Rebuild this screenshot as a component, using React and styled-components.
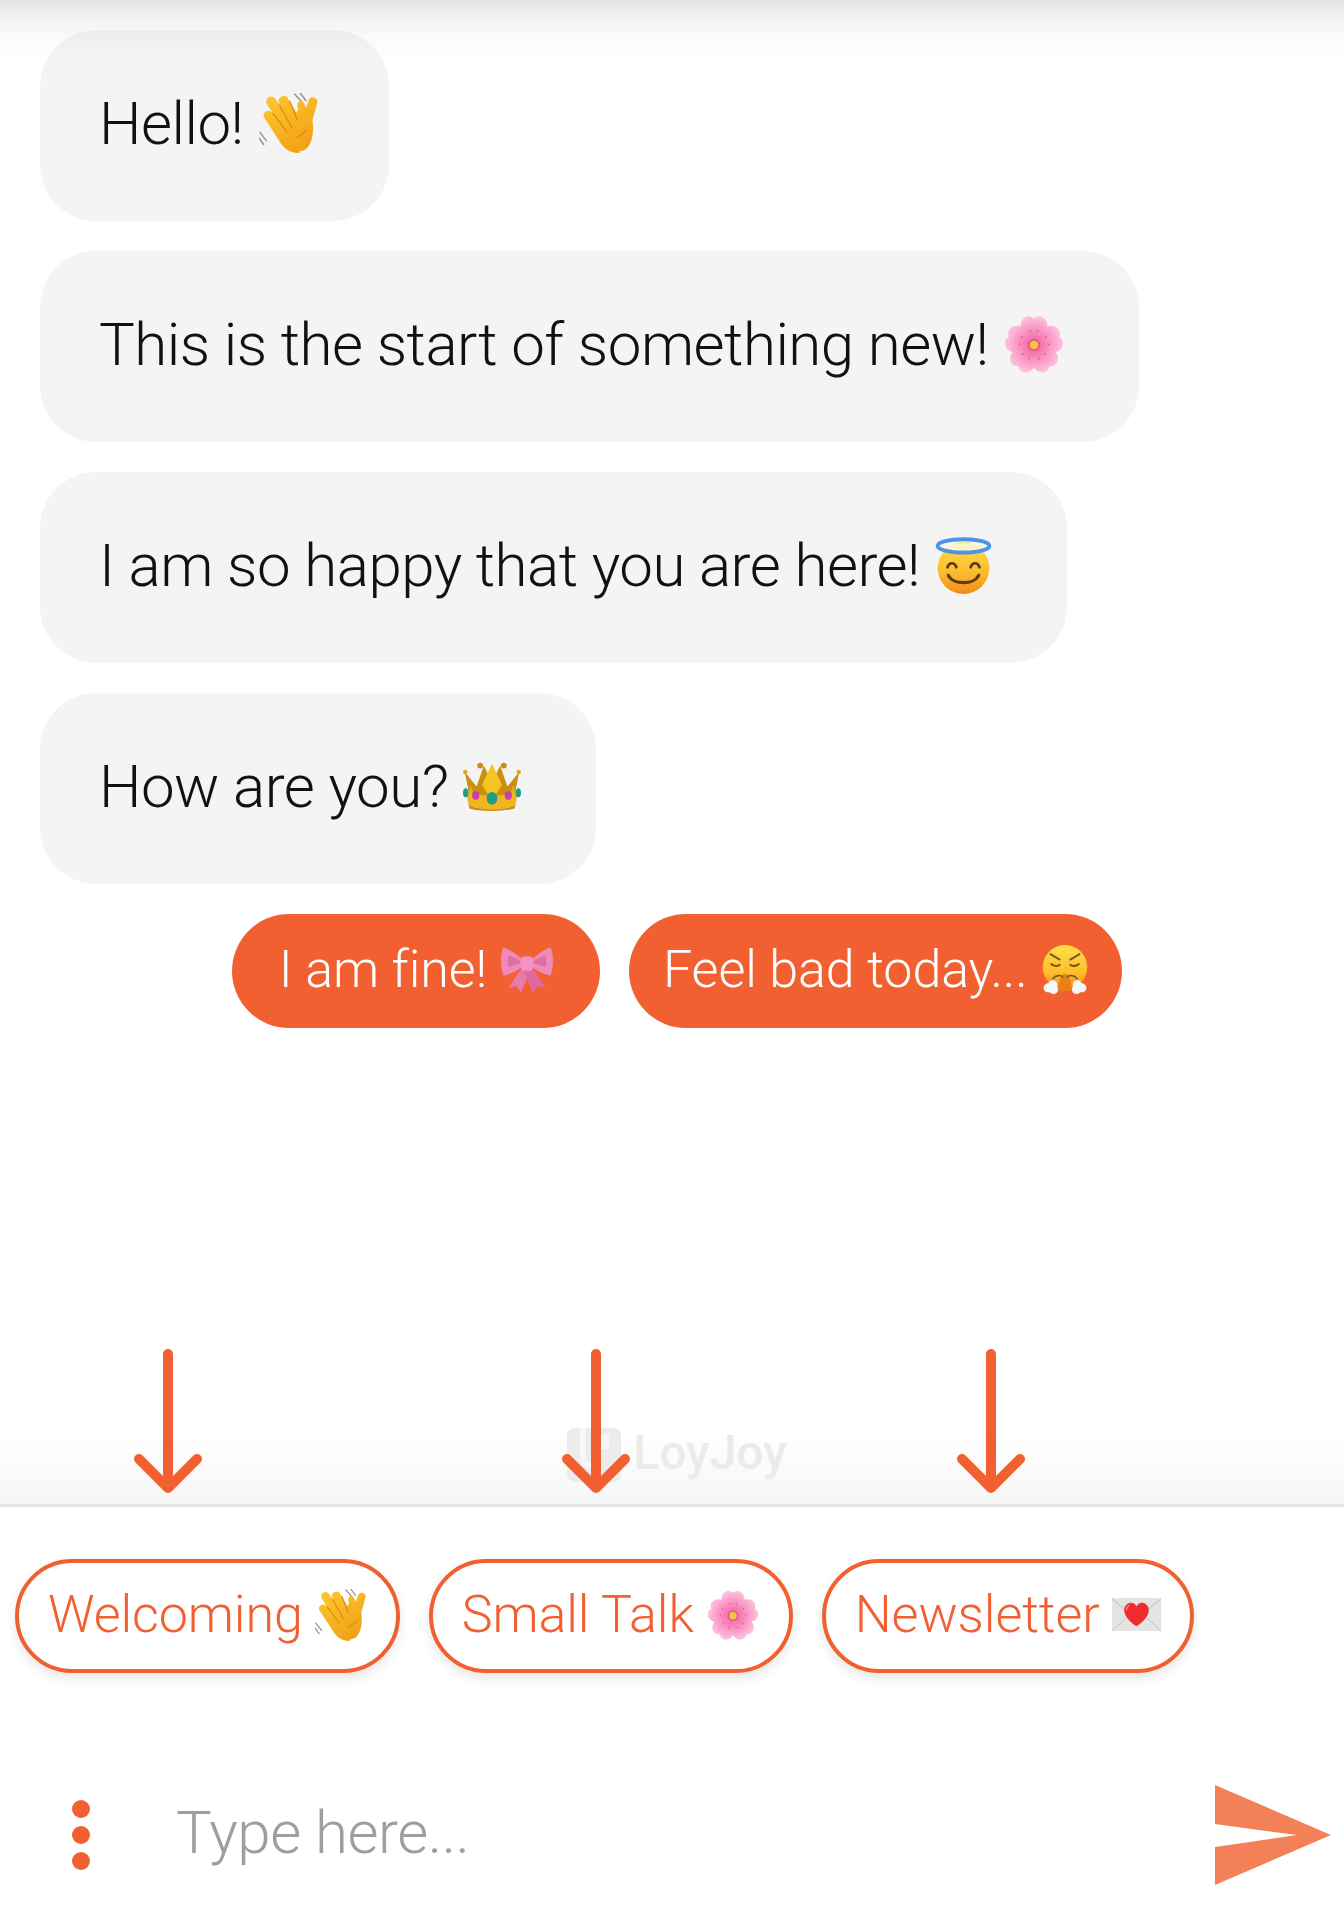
import React from "react";
import styled, { createGlobalStyle } from "styled-components";

const ORANGE = "#f26032";

const Global = createGlobalStyle`
  html, body {
    margin: 0;
    padding: 0;
    background: #fff;
  }

  body {
    font-family: Roboto, "Liberation Sans", sans-serif;
    font-weight: 300;
    color: #111;
  }

  * {
    box-sizing: border-box;
  }
`;

const Page = styled.main`
  display: flex;
  flex-direction: column;
  height: 1920px;
  overflow: hidden;
`;

const Chat = styled.section`
  position: relative;
  flex: 1;
  display: flex;
  flex-direction: column;
  align-items: flex-start;
  gap: 30px;
  padding: 30px 40px 21px;
  background: linear-gradient(to bottom, #fff calc(100% - 70px), #f6f6f6 100%);

  &::before {
    content: "";
    position: absolute;
    top: 0;
    left: 0;
    right: 0;
    height: 64px;
    background: linear-gradient(
      to bottom,
      rgba(0, 0, 0, 0.11),
      rgba(0, 0, 0, 0.045) 32%,
      rgba(0, 0, 0, 0.012) 70%,
      rgba(0, 0, 0, 0)
    );
    pointer-events: none;
  }
`;

const Bubble = styled.div`
  display: flex;
  align-items: center;
  gap: 15px;
  height: 191px;
  padding: 0 ${(p) => p.$right || 75}px 5px 59px;
  background: #f4f4f4;
  border-radius: 56px;
  font-size: 60px;
  letter-spacing: -0.5px;
  line-height: 71px;
  white-space: nowrap;
`;

const ReplyRow = styled.div`
  display: flex;
  align-self: stretch;
  justify-content: flex-start;
  gap: 29px;
  padding-left: 192px;
`;

const Reply = styled.button`
  display: flex;
  align-items: center;
  justify-content: center;
  gap: 14px;
  min-width: ${(p) => p.$minWidth || 0}px;
  height: 114px;
  padding: 0 34px 3px;
  border: 0;
  border-radius: 57px;
  background: ${ORANGE};
  color: #fff;
  font: inherit;
  font-size: 52px;
  letter-spacing: -0.1px;
  white-space: nowrap;
`;

const Watermark = styled.div`
  display: flex;
  align-items: center;
  align-self: center;
  gap: 12px;
  margin-top: auto;
  margin-left: 10px;
  color: #ebebeb;
  font-size: 48px;
  font-weight: 500;
  line-height: 53px;
`;

const WatermarkName = styled.span`
  margin-bottom: 4px;
`;

const Pointer = styled.svg`
  position: absolute;
  top: 1342px;
  left: ${(p) => p.$left}px;
  width: 76px;
  height: 156px;
`;

const Composer = styled.footer`
  flex: none;
  border-top: 3px solid #e2e4e6;
`;

const ChipRow = styled.div`
  display: flex;
  gap: 29px;
  padding: 52px 0 77px 15px;
`;

const Chip = styled.button`
  display: flex;
  align-items: center;
  gap: 12px;
  height: 114px;
  padding: 0 29px 3px;
  border: 4px solid ${ORANGE};
  border-radius: 57px;
  background: #fff;
  box-shadow: 0 5px 12px rgba(0, 0, 0, 0.1);
  color: ${ORANGE};
  font: inherit;
  font-size: 52px;
  letter-spacing: -0.1px;
  white-space: nowrap;
`;

const InputRow = styled.div`
  display: flex;
  align-items: center;
  height: 170px;
  padding: 0 13px 0 72px;
`;

const Dots = styled.div`
  display: flex;
  flex-direction: column;
  gap: 8px;
  margin-right: 86px;
`;

const Dot = styled.span`
  width: 18px;
  height: 18px;
  border-radius: 50%;
  background: ${ORANGE};
`;

const Placeholder = styled.span`
  flex: 1;
  padding-bottom: 5px;
  color: #9e9e9e;
  font-size: 60px;
  letter-spacing: -0.45px;
`;

const Emoji = styled.svg`
  flex: none;
  width: ${(p) => p.$w}px;
  height: ${(p) => p.$h}px;
`;

function Hand({ w = 60, h = 60 }) {
  return (
    <Emoji $w={w} $h={h} viewBox="0 0 64 64">
      <defs>
        <linearGradient id="handFill" x1="0" y1="0" x2="0.6" y2="1">
          <stop offset="0" stopColor="#fdc92f" />
          <stop offset="1" stopColor="#f3a117" />
        </linearGradient>
      </defs>
      <g fill="none" stroke="#8f8f8f" strokeWidth="1.5" strokeLinecap="round">
        <path d="M1 42l7 9M0 48l5 7M38 1l8 9M44 0l6 8" />
      </g>
      <path
        d="M43 64C31 64 25 57 21 50L6 27c-2-3-1-6 1-7 3-2 6-1 8 2L8 11c-1-3 0-6 3-7s5 0 7 3l4 6c-2-5-1-8 2-9 3-2 6-1 7 2l9 15 2-4c-2-4-1-7 1-8 3-1 4 0 6 4l1 3 3-8c1-3 4-4 6-3 3 1 4 3 3 6l-5 18c2 12 0 33-14 33z"
        fill="url(#handFill)"
      />
      <g fill="none" stroke="#d98a10" strokeWidth="1.3" strokeLinecap="round">
        <path d="M15 22l15 20M22 13l13 24M33 9l8 20" />
        <path d="M41 47c3-2 7-3 10-8" />
      </g>
    </Emoji>
  );
}

function Flower({ w = 60, h = 60 }) {
  const petals = [0, 72, 144, 216, 288];
  return (
    <Emoji $w={w} $h={h} viewBox="0 0 64 64">
      <defs>
        <radialGradient id="petalFill" cx="0.5" cy="0.95" r="0.95">
          <stop offset="0" stopColor="#ee5f9e" />
          <stop offset="0.55" stopColor="#f993c3" />
          <stop offset="1" stopColor="#fdc1dc" />
        </radialGradient>
      </defs>
      {petals.map((deg) => (
        <g key={deg} transform={`rotate(${deg} 32 33)`}>
          <path d="M32 34C22 28 16 20 18 10 20 3 27 0 32 5c5-5 12-2 14 5 2 10-4 18-14 24z" fill="url(#petalFill)" />
          <circle cx="28" cy="18" r="0.8" fill="#c94a84" />
          <circle cx="36" cy="18" r="0.8" fill="#c94a84" />
        </g>
      ))}
      <circle cx="32" cy="33" r="6.5" fill="#e8558f" />
      <circle cx="32" cy="33" r="4.6" fill="#f5c53c" />
    </Emoji>
  );
}

function Angel({ w = 57, h = 57 }) {
  return (
    <Emoji $w={w} $h={h} viewBox="0 0 64 64">
      <defs>
        <linearGradient id="angelFill" x1="0" y1="0" x2="0" y2="1">
          <stop offset="0" stopColor="#fde047" />
          <stop offset="0.65" stopColor="#fbb62a" />
          <stop offset="1" stopColor="#f08a18" />
        </linearGradient>
      </defs>
      <ellipse cx="32" cy="35" rx="29" ry="29" fill="url(#angelFill)" />
      <ellipse cx="32" cy="12" rx="21" ry="5" fill="#fff4c4" />
      <ellipse cx="32" cy="10" rx="29" ry="7.5" fill="none" stroke="#4c93ea" strokeWidth="4.5" />
      <g fill="none" stroke="#5c3d12" strokeWidth="3" strokeLinecap="round">
        <path d="M14 34c2-6 8-6 10 0M40 34c2-6 8-6 10 0" />
        <path d="M15 43c5 11 29 11 34 0" strokeWidth="3.6" />
      </g>
    </Emoji>
  );
}

function Crown({ w = 58, h = 50 }) {
  return (
    <Emoji $w={w} $h={h} viewBox="0 0 64 55">
      <path d="M2 12l6 30h48l6-30-13 16-8-23-9 18-9-18-8 23z" fill="#c98f10" />
      <path d="M32 3L21 26l11 18 11-18z" fill="#f4c525" />
      <path d="M8 26l6 14h-8zM56 26l-6 14h8z" fill="#e8ae18" />
      <path d="M3 32c9 8 49 8 58 0l-3 16c-8 7-44 7-52 0z" fill="#f1b61f" />
      <path d="M6 48c8 7 44 7 52 0l-1 4c-9 4-41 4-50 0z" fill="#c98f10" />
      <circle cx="19" cy="5" r="3.2" fill="#c98f10" />
      <circle cx="45" cy="5" r="3.2" fill="#c98f10" />
      <circle cx="2.5" cy="12" r="2.5" fill="#e0a816" />
      <circle cx="61.5" cy="12" r="2.5" fill="#e0a816" />
      <ellipse cx="32" cy="41" rx="6" ry="7" fill="#1f9e85" />
      <ellipse cx="14" cy="38" rx="4" ry="4.6" fill="#c93fa8" />
      <ellipse cx="50" cy="38" rx="4" ry="4.6" fill="#c93fa8" />
      <ellipse cx="3" cy="35" rx="3" ry="5" fill="#1f9e85" />
      <ellipse cx="61" cy="35" rx="3" ry="5" fill="#1f9e85" />
    </Emoji>
  );
}

function Bow({ w = 52, h = 46 }) {
  return (
    <Emoji $w={w} $h={h} viewBox="0 0 64 56">
      <path d="M25 26L9 50l10-2 6 8 11-28z" fill="#e77aab" />
      <path d="M39 26l16 24-10-2-6 8-11-28z" fill="#de6a9e" />
      <path d="M27 16C20 9 9 2 3 0-1 9-1 24 3 35c8-2 18-6 24-12z" fill="#ef89b8" />
      <path d="M37 16c7-7 18-14 24-16 4 9 4 24 0 35-8-2-18-6-24-12z" fill="#ef89b8" />
      <path d="M26 18C20 14 13 11 9 10c-1 5-1 10 0 14 6-1 12-3 17-6z" fill="#de6fa2" />
      <path d="M38 18c6-4 13-7 17-8 1 5 1 10 0 14-6-1-12-3-17-6z" fill="#de6fa2" />
      <rect x="24" y="11" width="16" height="18" rx="6" fill="#f294bf" />
    </Emoji>
  );
}

function Steam({ w = 46, h = 49 }) {
  return (
    <Emoji $w={w} $h={h} viewBox="0 0 60 64">
      <defs>
        <linearGradient id="steamFill" x1="0" y1="0" x2="0" y2="1">
          <stop offset="0" stopColor="#fde047" />
          <stop offset="0.6" stopColor="#fcc02c" />
          <stop offset="1" stopColor="#f38c1b" />
        </linearGradient>
      </defs>
      <circle cx="30" cy="29" r="29" fill="url(#steamFill)" />
      <g fill="none" stroke="#7a5418" strokeWidth="2.6" strokeLinecap="round">
        <path d="M11 12l12 7M49 12l-12 7" />
        <path d="M12 25c4 3 8 3 11 1M48 25c-4 3-8 3-11 1" />
      </g>
      <path d="M22 60c0-14 2-22 8-22s8 8 8 22z" fill="#ea7f17" />
      <path d="M14 44c4-5 11-5 13-2M46 44c-4-5-11-5-13-2" fill="none" stroke="#7a5418" strokeWidth="2" strokeLinecap="round" />
      <g fill="#f3f8fd">
        <circle cx="8" cy="56" r="6" />
        <circle cx="14" cy="52" r="6" />
        <circle cx="15" cy="58" r="6" />
        <circle cx="52" cy="56" r="6" />
        <circle cx="46" cy="52" r="6" />
        <circle cx="45" cy="58" r="6" />
      </g>
    </Emoji>
  );
}

function LoveLetter({ w = 49, h = 33 }) {
  return (
    <Emoji $w={w} $h={h} viewBox="0 0 64 43">
      <rect width="64" height="43" rx="1" fill="#e4e4e4" />
      <path d="M0 1l32 26L64 1M0 43l24-22M64 43L40 21" fill="none" stroke="#c9c9c9" strokeWidth="1.5" />
      <path d="M32 37C22 30 16 23 16 15.5 16 9.5 21 6 25 6c3 0 6 2 7 5 1-3 4-5 7-5 4 0 9 3.5 9 9.5C48 23 42 30 32 37z" fill="#ef2b2d" />
      <path d="M22 10c-2 1-3 3-3 5" fill="none" stroke="#ff8d8d" strokeWidth="1.6" strokeLinecap="round" />
    </Emoji>
  );
}

function LoyJoyMark() {
  return (
    <svg width="54" height="54" viewBox="0 0 54 54">
      <rect width="54" height="54" rx="8" fill="#ececec" />
      <path d="M13 0v31a9 9 0 0 0 9 9h6v-6h-5a4 4 0 0 1-4-4V0z" fill="#fff" opacity="0.65" />
      <path d="M33 7h9v14h-9z" fill="#fff" opacity="0.65" />
    </svg>
  );
}

function DownArrow({ left }) {
  return (
    <Pointer $left={left} viewBox="0 0 76 156" fill="none" stroke={ORANGE} strokeWidth="10" strokeLinecap="round" strokeLinejoin="round">
      <path d="M38 12V145M9 117l29 29 29-29" />
    </Pointer>
  );
}

function SendIcon() {
  return (
    <svg width="116" height="100" viewBox="0 0 116 100">
      <path d="M0 0L116 50 0 100V62L82 50 0 39z" fill="#f48058" />
    </svg>
  );
}

export default function App() {
  return (
    <Page>
      <Global />

      <Chat>
        <Bubble $right={70}>
          Hello! <Hand />
        </Bubble>

        <Bubble>
          This is the start of something new! <Flower />
        </Bubble>

        <Bubble>
          I am so happy that you are here! <Angel />
        </Bubble>

        <Bubble>
          How are you? <Crown />
        </Bubble>

        <ReplyRow>
          <Reply $minWidth={368}>
            I am fine! <Bow />
          </Reply>

          <Reply>
            Feel bad today... <Steam />
          </Reply>
        </ReplyRow>

        <Watermark>
          <LoyJoyMark />
          <WatermarkName>LoyJoy</WatermarkName>
        </Watermark>
      </Chat>

      <DownArrow left={130} />
      <DownArrow left={558} />
      <DownArrow left={953} />

      <Composer>
        <ChipRow>
          <Chip>
            Welcoming <Hand w={52} h={52} />
          </Chip>

          <Chip>
            Small Talk <Flower w={54} h={52} />
          </Chip>

          <Chip>
            Newsletter <LoveLetter />
          </Chip>
        </ChipRow>

        <InputRow>
          <Dots>
            <Dot />
            <Dot />
            <Dot />
          </Dots>

          <Placeholder>Type here...</Placeholder>

          <SendIcon />
        </InputRow>
      </Composer>
    </Page>
  );
}
